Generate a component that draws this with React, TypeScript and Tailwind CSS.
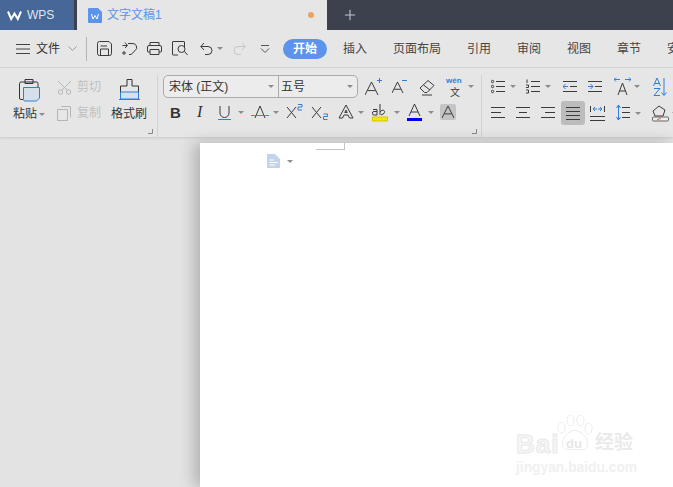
import type { ReactNode } from "react"
import { Plus } from "lucide-react"

const DARK = "#3a3a3a"
const BLUE = "#2f7fd8"

function Caret({ className = "" }: { className?: string }) {
  return <span className={`block h-0 w-0 border-x-[3px] border-t-[3px] border-x-transparent border-t-[#8c8c8c] ${className}`} />
}

function Ico({ w, h = 20, children }: { w: number; h?: number; children: ReactNode }) {
  return (
    <svg width={w} height={h} viewBox={`0 0 ${w} ${h}`} fill="none" stroke={DARK} strokeWidth="1" className="shrink-0">
      {children}
    </svg>
  )
}

function Lines({ rows }: { rows: [number, number, number][] }) {
  return (
    <>
      {rows.map(([x1, x2, y]) => (
        <path key={`${x1}-${y}`} d={`M${x1} ${y}.5H${x2}`} />
      ))}
    </>
  )
}

function LetterA({ x = 0, y = 4, s = 12 }: { x?: number; y?: number; s?: number }) {
  return <path d={`M${x} ${y + s}L${x + s / 2} ${y}L${x + s} ${y + s}M${x + s * 0.2} ${y + s * 0.66}H${x + s * 0.8}`} />
}

function TopBar() {
  return (
    <div className="flex h-[30px] bg-[#3d414d]">
      <div className="flex w-[74px] items-center bg-[#466798] pl-[7px] text-[12px] text-[#dfe6f1]">
        <svg width="15" height="11" viewBox="0 0 15 11" fill="none" stroke="#fff" strokeWidth="2">
          <path d="M1 1.5L4.2 9L7.5 3.5L10.8 9L14 1.5" />
        </svg>
        <span className="ml-[5px]">WPS</span>
      </div>
      <div className="ml-[3px] flex w-[250px] items-center bg-[#e6e6e6] pl-[11px]">
        <svg width="14" height="15" viewBox="0 0 14 15" className="shrink-0">
          <path d="M1 0H10L14 4V14a1 1 0 0 1-1 1H1a1 1 0 0 1-1-1V1a1 1 0 0 1 1-1Z" fill="#5b94ea" />
          <path d="M3.5 6L5 11L7 7.5L9 11L10.5 6" fill="none" stroke="#fff" />
        </svg>
        <span className="ml-[5px] text-[12px] text-[#5b94ea]">文字文稿1</span>
        <span className="ml-auto mr-[13px] h-[6px] w-[6px] rounded-full bg-[#e9a25f]" />
      </div>
      <Plus size={16} strokeWidth={1.6} className="ml-[15px] mt-[7px] text-[#c4c6cb]" />
    </div>
  )
}

function MenuBar() {
  const tabs = ["插入", "页面布局", "引用", "审阅", "视图", "章节", "安全"]
  return (
    <div className="flex h-[38px] items-center overflow-hidden border-b border-[#d8d8d8] bg-[#e6e6e6] text-[12px] text-[#333]">
      <svg width="14" height="10" viewBox="0 0 14 10" stroke="#444" className="ml-[16px] shrink-0">
        <path d="M0 .5H14M0 5H14M0 9.5H14" />
      </svg>
      <span className="ml-[6px] shrink-0">文件</span>
      <svg width="9" height="5" viewBox="0 0 9 5" fill="none" stroke="#999" className="ml-[8px] shrink-0">
        <path d="M.5 .5L4.5 4.5L8.5 .5" />
      </svg>
      <span className="ml-[9px] h-[24px] w-px shrink-0 bg-[#b5b5b5]" />
      <div className="ml-[10px] flex shrink-0 items-center">
        <Ico w={15} h={15}>
          <path d="M2.500 .5H12L14.500 3V12.500a2 2 0 0 1-2 2H2.500a2 2 0 0 1-2-2V2.500a2 2 0 0 1 2-2ZM3.500 14.500V8H11.500V14.500M3.500 5H10" />
        </Ico>
        <span className="ml-[10px] block">
          <Ico w={16} h={15}>
            <path d="M6 2.500H10a4 4 0 0 1 3 7.200L9 13.500H7M.5 4.500H5M3 1.500L5.500 4.500L3 7M2 10V14M0 12H4" />
          </Ico>
        </span>
        <span className="ml-[9px] block">
          <Ico w={15} h={15}>
            <path d="M3 5V1.500H12V5M3 11H1a.5.5 0 0 1-.5-.5V6A1.500 1.500 0 0 1 2 4.500H13A1.500 1.500 0 0 1 14.500 6V10.500a.5.5 0 0 1-.5.5H12M3 8.500H12V13.500H3Z" />
          </Ico>
        </span>
        <span className="ml-[10px] block">
          <Ico w={16} h={15}>
            <path d="M12.500 6V1a.5.5 0 0 0-.5-.5H1a.5.5 0 0 0-.5.5V13.500a.5.500 0 0 0 .5.500H6M12.500 10.500L15.500 14" />
            <circle cx="9.500" cy="8" r="3.500" />
          </Ico>
        </span>
        <span className="ml-[12px] block">
          <Ico w={13} h={15}>
            <path d="M1 5.500H8a4 4 0 0 1 0 8H5M4 2L.8 5.500L4 9" />
          </Ico>
        </span>
        <Caret className="ml-[4px]" />
        <span className="ml-[10px] block">
          <svg width="13" height="15" viewBox="0 0 13 15" fill="none" stroke="#c6c6c6">
            <path d="M12 5.500H5a4 4 0 0 0 0 8H8M9 2L12.200 5.500L9 9" />
          </svg>
        </span>
        <span className="ml-[14px] block">
          <svg width="10" height="10" viewBox="0 0 10 10" fill="none" stroke="#555">
            <path d="M1 1.500H9M1 4.500L5 8.500L9 4.500" />
          </svg>
        </span>
      </div>
      <span className="ml-[13px] flex h-[20px] w-[44px] shrink-0 items-center justify-center rounded-full bg-[#5b94ea] font-bold text-white">开始</span>
      <div className="ml-[16px] flex gap-[26px] whitespace-nowrap text-[#444]">
        {tabs.map((t) => (
          <span key={t}>{t}</span>
        ))}
      </div>
    </div>
  )
}

function ClipboardGroup() {
  return (
    <div className="relative flex h-[62px] w-[154px] shrink-0 text-[12px] text-[#333]">
      <div className="ml-[8px] flex w-[36px] flex-col items-center">
        <svg width="22" height="26" viewBox="0 0 22 26" fill="none" stroke="#333" className="mt-[2px]">
          <path d="M3 5H19A1.500 1.500 0 0 1 20 6.500V10M3 5A1.500 1.500 0 0 0 1.500 6.500V21A1.500 1.500 0 0 0 3 22.500H5M7 2.500H15V6.500H7Z" />
          <path d="M5.500 10.500H21.500V21L18.500 24H7A1.500 1.500 0 0 1 5.500 22.500Z" fill="#d6e0ea" stroke={BLUE} />
        </svg>
        <div className="mt-[2px] flex items-center">
          <span>粘贴</span>
          <Caret className="ml-[2px]" />
        </div>
      </div>
      <div className="ml-[10px] mt-[3px] flex w-[46px] flex-col gap-[8px] text-[#c0c0c0]">
        <div className="flex h-[18px] items-center">
          <svg width="15" height="15" viewBox="0 0 15 15" fill="none" stroke="#b5b5b5">
            <path d="M1 1L10 10M14 1L5 10" />
            <circle cx="3.500" cy="12" r="2.200" />
            <circle cx="11.500" cy="12" r="2.200" />
          </svg>
          <span className="ml-[5px]">剪切</span>
        </div>
        <div className="flex h-[18px] items-center">
          <svg width="15" height="15" viewBox="0 0 15 15" fill="none" stroke="#b5b5b5">
            <path d="M4.500 .5H13.500V11.500M.5 3.500H10.500V14.500H.5Z" />
          </svg>
          <span className="ml-[5px]">复制</span>
        </div>
      </div>
      <div className="ml-[7px] flex w-[38px] flex-col items-center">
        <svg width="21" height="26" viewBox="0 0 21 26" fill="none" stroke="#333" className="mt-[2px]">
          <path d="M8 2.500H13V9H19.500V22H1.500V9H8Z" />
          <path d="M1.500 15H19.500V22H1.500Z" fill="#d3e1f0" stroke={BLUE} />
          <path d="M0 22.500H21" stroke={BLUE} />
        </svg>
        <span className="mt-[2px]">格式刷</span>
      </div>
      <svg width="5" height="5" viewBox="0 0 5 5" stroke="#888" fill="none" className="absolute bottom-[3px] right-[4px]">
        <path d="M0 4.500H4.500V0" />
      </svg>
    </div>
  )
}

function FontGroup() {
  return (
    <div className="relative h-[62px] w-[323px] shrink-0 pl-[5px] text-[12px] text-[#333]">
      <div className="flex h-[23px] items-center">
        <div className="flex h-[23px] w-[195px] shrink-0 rounded-[5px] border border-[#ababab] bg-[#ececec]">
          <div className="flex w-[115px] items-center justify-between border-r border-[#ababab] pl-[5px] pr-[4px]">
            <span>宋体 (正文)</span>
            <Caret />
          </div>
          <div className="flex flex-1 items-center justify-between pl-[2px] pr-[4px]">
            <span>五号</span>
            <Caret />
          </div>
        </div>
        <span className="ml-[7px] block">
          <Ico w={17}>
            <LetterA y={5} s={13} />
            <path d="M12 3.500H17M14.500 1V6" stroke={BLUE} />
          </Ico>
        </span>
        <span className="ml-[10px] block">
          <Ico w={15}>
            <LetterA y={5} s={11} />
            <path d="M10 3.500H15" stroke={BLUE} />
          </Ico>
        </span>
        <span className="ml-[12px] block">
          <Ico w={16}>
            <path d="M1 11L9 3.500L15 8.500L8 15.500H5.500ZM4.500 8L11 13M3 18H13" />
          </Ico>
        </span>
        <span className="ml-[11px] block">
          <svg width="19" height="22" viewBox="0 0 19 22" fill="none">
            <text x="0" y="7" fontSize="8" fontWeight="700" fill={BLUE} fontFamily="Liberation Sans, sans-serif">wén</text>
            <text x="4" y="20" fontSize="10" fill={DARK} fontFamily="Noto Sans CJK SC, sans-serif">文</text>
          </svg>
        </span>
        <Caret className="ml-[3px]" />
      </div>
      <div className="mt-[3px] flex h-[22px] items-center">
        <span className="ml-[7px] block w-[12px] font-['Liberation_Sans',sans-serif] text-[15px] font-bold leading-none">B</span>
        <span className="ml-[15px] block w-[10px] font-['Liberation_Serif',serif] text-[16px] italic leading-none">I</span>
        <span className="ml-[11px] block">
          <Ico w={13}>
            <path d="M2 4V11a4.500 4.500 0 0 0 9 0V4" />
            <path d="M0 17.500H13" stroke={BLUE} />
          </Ico>
        </span>
        <Caret className="ml-[7px]" />
        <span className="ml-[7px] block">
          <Ico w={18}>
            <path d="M4 16L9 4L14 16" />
            <path d="M0 13.500H18" stroke="#e0524c" />
          </Ico>
        </span>
        <Caret className="ml-[4px]" />
        <span className="ml-[7px] block">
          <Ico w={17}>
            <path d="M1 5L10 16M10 5L1 16" />
            <path d="M12 2.500H16V5H12V8H16" stroke={BLUE} />
          </Ico>
        </span>
        <span className="ml-[8px] block">
          <Ico w={18}>
            <path d="M1 5L10 16M10 5L1 16" />
            <path d="M12.500 12H16.500V14.500H12.500V17.500H16.500" stroke={BLUE} />
          </Ico>
        </span>
        <span className="ml-[9px] block">
          <Ico w={16}>
            <path d="M1 16L8 3L15 16H11.500L10 13H6L4.500 16ZM6.800 10.500L8 8L9.200 10.500Z" />
          </Ico>
        </span>
        <Caret className="ml-[4px]" />
        <span className="ml-[8px] block">
          <svg width="16" height="20" viewBox="0 0 16 20" fill="none" stroke={DARK}>
            <path d="M1 7.500H5V13H2A1.500 1.500 0 0 1 2 9.500H5M8 2V13M8 10C10 7 14 8 12 11.500L9 13" />
            <rect x="0.500" y="15" width="15" height="4" fill="#f5e60d" stroke="#d5c800" />
          </svg>
        </span>
        <Caret className="ml-[6px]" />
        <span className="ml-[7px] block">
          <svg width="15" height="20" viewBox="0 0 15 20" fill="none" stroke={DARK}>
            <path d="M2 14L7.500 2L13 14M4 10H11" />
            <rect x="0" y="16" width="15" height="3" fill="#0000e6" stroke="none" />
          </svg>
        </span>
        <Caret className="ml-[6px]" />
        <span className="ml-[6px] flex h-[16px] w-[16px] items-center justify-center rounded-[2px] bg-[#c4c4c4]">
          <Ico w={12} h={12}>
            <LetterA y={0} s={12} />
          </Ico>
        </span>
      </div>
      <svg width="5" height="5" viewBox="0 0 5 5" stroke="#888" fill="none" className="absolute bottom-[3px] right-[4px]">
        <path d="M0 4.500H4.500V0" />
      </svg>
    </div>
  )
}

function ParagraphGroup() {
  return (
    <div className="h-[62px] shrink-0 pl-[9px]">
      <div className="flex h-[23px] items-center">
        <Ico w={14}>
          <Lines rows={[[5, 14, 4], [5, 14, 9], [5, 14, 14]]} />
          <circle cx="1.500" cy="4.500" r="1.200" />
          <circle cx="1.500" cy="9.500" r="1.200" />
          <circle cx="1.500" cy="14.500" r="1.200" />
        </Ico>
        <Caret className="ml-[5px]" />
        <span className="ml-[10px] block">
          <Ico w={14}>
            <Lines rows={[[5, 14, 4], [5, 14, 9], [5, 14, 14]]} />
            <path d="M1 2.500V6M0 8H2.500V10.500H0M0 13H2.500V16H0" />
          </Ico>
        </span>
        <Caret className="ml-[5px]" />
        <span className="ml-[12px] block">
          <Ico w={14}>
            <Lines rows={[[0, 14, 4], [7, 14, 9], [0, 14, 14]]} />
            <path d="M5 9.500H0M2.500 7L0 9.500L2.500 12" stroke={BLUE} />
          </Ico>
        </span>
        <span className="ml-[11px] block">
          <Ico w={14}>
            <Lines rows={[[0, 14, 4], [7, 14, 9], [0, 14, 14]]} />
            <path d="M0 9.500H5M2.500 7L5 9.500L2.500 12" stroke={BLUE} />
          </Ico>
        </span>
        <span className="ml-[12px] block">
          <Ico w={17}>
            <path d="M4 18L8.500 6L13 18M5.500 14H11.500" />
            <path d="M0 2.500H6M2 .5L0 2.500L2 4.500M11 2.500H17M15 .5L17 2.500L15 4.500" stroke={BLUE} />
          </Ico>
        </span>
        <Caret className="ml-[3px]" />
        <span className="ml-[13px] block">
          <Ico w={14}>
            <path d="M.5 9L4 1L7.500 9M1.800 6.500H6.200M1 11.500H7L1 18.500H7" stroke={BLUE} />
            <path d="M11 1V18M8.500 15.500L11 18.500L13.500 15.500" stroke={BLUE} />
          </Ico>
        </span>
      </div>
      <div className="mt-[3px] flex h-[24px] items-center">
        <Ico w={14}>
          <Lines rows={[[0, 14, 4], [0, 10, 9], [0, 14, 14]]} />
        </Ico>
        <span className="ml-[11px] block">
          <Ico w={14}>
            <Lines rows={[[0, 14, 4], [3, 11, 9], [0, 14, 14]]} />
          </Ico>
        </span>
        <span className="ml-[11px] block">
          <Ico w={14}>
            <Lines rows={[[0, 14, 4], [4, 14, 9], [0, 14, 14]]} />
          </Ico>
        </span>
        <span className="ml-[6px] flex h-[24px] w-[24px] items-center justify-center rounded-[3px] bg-[#bcbcbc]">
          <Ico w={14} h={14}>
            <Lines rows={[[0, 14, 1], [0, 14, 5], [0, 14, 9], [0, 14, 13]]} />
          </Ico>
        </span>
        <span className="ml-[5px] block">
          <Ico w={15}>
            <Lines rows={[[0, 15, 13], [0, 15, 17]]} />
            <path d="M.5 3V9M14.500 3V9" />
            <path d="M3 6H7M3 6L5 4M3 6L5 8M12 6H8M12 6L10 4M12 6L10 8" stroke={BLUE} />
          </Ico>
        </span>
        <span className="ml-[11px] block">
          <Ico w={14}>
            <Lines rows={[[6, 14, 4], [6, 14, 9], [6, 14, 14]]} />
            <path d="M2.500 2V17M.5 5L2.500 2L4.500 5M.5 14L2.500 17L4.500 14" stroke={BLUE} />
          </Ico>
        </span>
        <Caret className="ml-[5px]" />
        <span className="ml-[11px] block">
          <Ico w={17}>
            <path d="M1 8L7 3L13 7L11 13H3Z" />
            <rect x="0.500" y="14" width="16" height="4" rx="1" stroke="#666" fill="#eee" />
            <path d="M5 17L9 15" stroke="#d9534f" />
          </Ico>
        </span>
        <Caret className="ml-[3px]" />
      </div>
    </div>
  )
}

function Watermark() {
  return (
    <div className="absolute left-[516px] top-[415px] h-[62px] w-[120px] select-none text-[#f6f6f6]">
      <svg width="36" height="38" viewBox="0 0 40 42" fill="none" stroke="#e9e9e9" className="absolute left-[41px] top-0">
        <ellipse cx="5" cy="14" rx="4" ry="6" />
        <ellipse cx="15" cy="6" rx="4" ry="6" />
        <ellipse cx="26" cy="6" rx="4" ry="6" />
        <ellipse cx="35" cy="15" rx="4" ry="6" />
        <path d="M20 17C13 17 4 27 6 34C8 40 15 38 20 38C25 38 33 40 34 34C36 27 27 17 20 17Z" />
      </svg>
      <span className="absolute left-0 top-[16px] font-['Liberation_Sans',sans-serif] text-[26px] font-bold leading-none tracking-[1px] [-webkit-text-stroke:1px_#e9e9e9]">Bai</span>
      <span className="absolute left-[50px] top-[22px] font-['Liberation_Sans',sans-serif] text-[13px] font-bold leading-none text-[#e6e6e6]">du</span>
      <span className="absolute left-[79px] top-[18px] text-[19px] font-bold leading-none text-[#eaeaea]">经验</span>
      <span className="absolute left-0 top-[46px] whitespace-nowrap font-['Liberation_Sans',sans-serif] text-[13.800px] font-bold leading-none text-[#f0f0f0]">jingyan.baidu.com</span>
    </div>
  )
}

export default function App() {
  return (
    <div className="relative flex h-[487px] w-[673px] flex-col overflow-hidden bg-[#e3e3e3] font-['Liberation_Sans','Noto_Sans_CJK_SC',sans-serif]">
      <TopBar />
      <MenuBar />
      <div className="flex h-[69px] shrink-0 items-start overflow-hidden bg-[#e6e6e6] pt-[7px] shadow-[0_1px_3px_rgba(0,0,0,0.12)]">
        <div className="ml-[3px] flex">
          <ClipboardGroup />
        </div>
        <span className="h-[62px] w-px shrink-0 bg-[#d2d2d2]" />
        <FontGroup />
        <span className="h-[62px] w-px shrink-0 bg-[#d2d2d2]" />
        <ParagraphGroup />
      </div>
      <div className="relative ml-[200px] mt-[6px] flex-1 bg-white shadow-[-6px_0_14px_rgba(0,0,0,0.22)]">
        <div className="ml-[116px] h-[7px] w-[29px] border-b border-r border-[#c4c4c4]" />
        <div className="ml-[67px] mt-[4px] flex items-center">
          <svg width="13" height="14" viewBox="0 0 13 14">
            <path d="M0 0H8L13 5V14H0Z" fill="#c2d3ea" />
            <path d="M2.500 6H7M2.500 8.500H10.500M2.500 11H8" stroke="#fff" />
          </svg>
          <Caret className="ml-[7px]" />
        </div>
      </div>
      <Watermark />
    </div>
  )
}
